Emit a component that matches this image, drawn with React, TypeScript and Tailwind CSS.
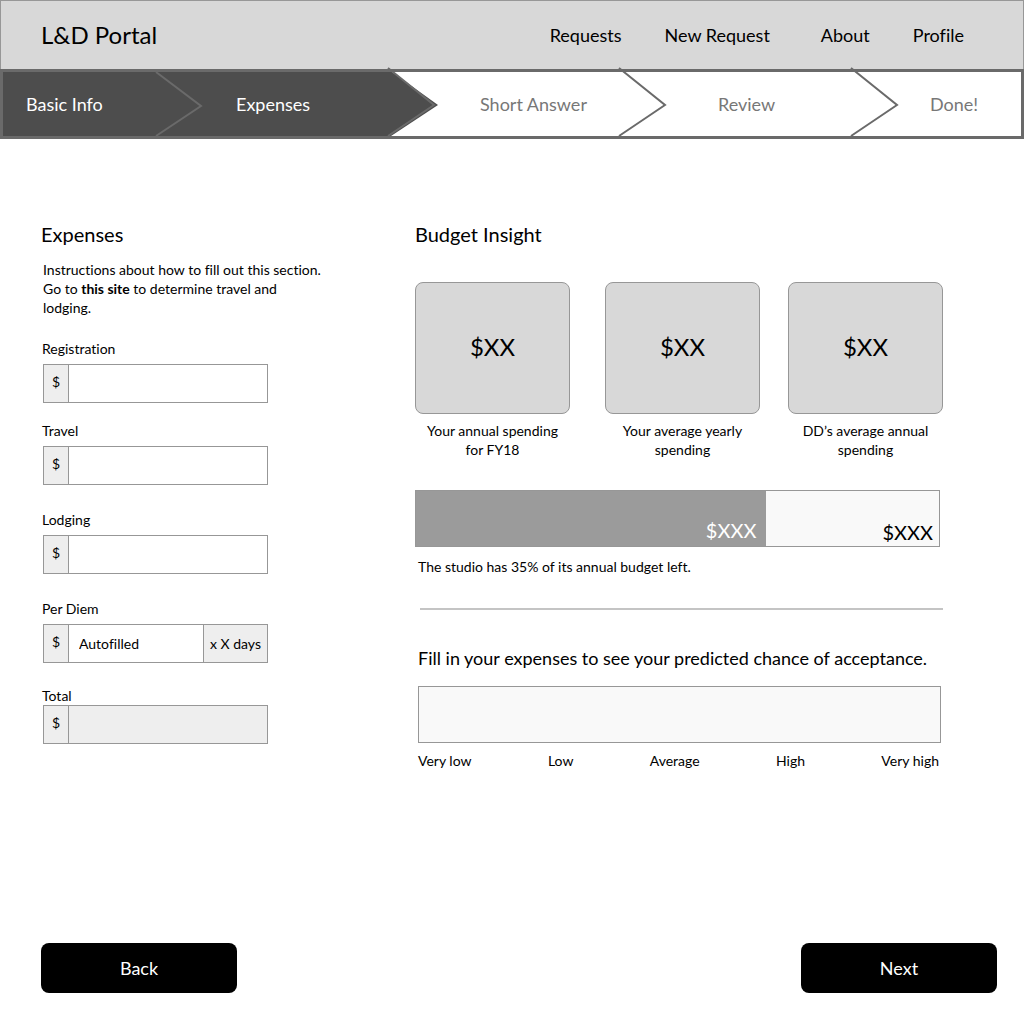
import React from "react";

const NAV = [
  { label: "Requests", space: "mr-[43px]" },
  { label: "New Request", space: "mr-[51px]" },
  { label: "About", space: "mr-[43px]" },
  { label: "Profile", space: "" },
];

const STEPS = [
  { label: "Basic Info", pad: "pl-[23px]", done: true },
  { label: "Expenses", pad: "pl-[33px]", done: true, current: true },
  { label: "Short Answer", pad: "pl-[44px]" },
  { label: "Review", pad: "pl-[51px]" },
  { label: "Done!", pad: "pl-[31px]", last: true },
];

const STATS = [
  { id: "own-year", text: "Your annual spending for FY18" },
  { id: "own-average", text: "Your average yearly spending" },
  { id: "all-average", text: "DD’s average annual spending" },
];

const LEVELS = ["Very low", "Low", "Average", "High", "Very high"];

function Chevron({ filled, inside }: { filled?: boolean; inside?: boolean }) {
  return (
    <svg width="48" height="64" viewBox="0 0 48 64" className="shrink-0 overflow-visible" aria-hidden="true">
      {filled && <path d="M-1 0H4L50 33L3 64H-1Z" fill="#4d4d4d" />}
      <path
        d={inside ? "M1 0L46 34L1 64" : "M0 -4L46 33L0 64"}
        fill="none"
        stroke="#6a6a6a"
        strokeWidth="2"
      />
    </svg>
  );
}

type FieldProps = {
  id: string;
  label: string;
  space?: string;
  value?: string;
  suffix?: string;
  total?: boolean;
};

function Field({ id, label, space = "", value, suffix, total }: FieldProps) {
  return (
    <div className={space}>
      <label htmlFor={id} className={total ? "block" : "block pb-1.5"}>
        {label}
      </label>
      <div className="ml-px flex h-[39px] w-full max-w-[225px] border border-[#979797] bg-white">
        <span className="flex w-[25px] shrink-0 items-center justify-center border-r border-[#979797] bg-[#eeeeee] pb-1">
          $
        </span>
        <input
          id={id}
          type="text"
          defaultValue={value}
          readOnly={total}
          className={
            total
              ? "min-w-0 flex-1 bg-[#eeeeee] px-2.5 outline-none"
              : "min-w-0 flex-1 bg-white px-2.5 outline-none"
          }
        />
        {suffix && (
          <span className="flex w-16 shrink-0 items-center justify-center border-l border-[#979797] bg-[#eeeeee] whitespace-nowrap">
            {suffix}
          </span>
        )}
      </div>
    </div>
  );
}

export default function App() {
  return (
    <div className="flex min-h-screen flex-col bg-white font-['Lato',sans-serif] text-sm leading-[19px] text-black [font-variant-ligatures:none]">
      <header className="flex h-[69px] items-center justify-between border border-b-0 border-[#979797] bg-[#d8d8d8] pr-[59px] pl-10">
        <a href="#home" className="text-2xl">
          L&amp;D Portal
        </a>
        <nav className="flex text-lg">
          {NAV.map((item) => (
            <a key={item.label} href="#nav" className={item.space}>
              {item.label}
            </a>
          ))}
        </nav>
      </header>

      <ol className="grid h-[70px] grid-cols-[200fr_233fr_231fr_232fr_122fr] border-3 border-[#6a6a6a] text-lg">
        {STEPS.map((step) => (
          <li
            key={step.label}
            aria-current={step.current ? "step" : undefined}
            className={
              step.done && !step.current ? "flex bg-[#4d4d4d] text-white" : step.done ? "flex text-white" : "flex text-[#777777]"
            }
          >
            <span
              className={`flex flex-1 items-center whitespace-nowrap ${step.pad} ${step.done ? "bg-[#4d4d4d]" : ""}`}
            >
              {step.label}
            </span>
            {!step.last && <Chevron filled={step.current} inside={step.done && !step.current} />}
          </li>
        ))}
      </ol>

      <main className="flex flex-1 flex-col">
        <div className="grid grid-cols-[374px_1fr] pt-[83px] pr-[81px] pl-[41px]">
          <form>
            <h2 className="text-xl leading-6">Expenses</h2>
            <p className="mt-3.5 ml-0.5 max-w-[282px]">
              Instructions about how to fill out this section. Go to{" "}
              <a href="#site" className="font-bold">
                this site
              </a>{" "}
              to determine travel and lodging.
            </p>
            <div className="mt-[22px] pl-px">
              <Field id="registration" label="Registration" />
              <Field id="travel" label="Travel" space="mt-[18px]" />
              <Field id="lodging" label="Lodging" space="mt-[25px]" />
              <Field id="per-diem" label="Per Diem" space="mt-[25px]" value="Autofilled" suffix="x X days" />
              <Field id="total" label="Total" space="mt-[23px]" total />
            </div>
          </form>

          <section>
            <h2 className="text-xl leading-6">Budget Insight</h2>
            <div className="mt-9 grid grid-cols-[190fr_183fr_155fr]">
              {STATS.map((stat) => (
                <figure key={stat.id} className="w-[155px]">
                  <div className="flex h-[132px] items-center justify-center rounded-lg border border-[#979797] bg-[#d8d8d8] pb-0.5 text-2xl">
                    $XX
                  </div>
                  <figcaption className="mt-[7px] px-2 text-center">{stat.text}</figcaption>
                </figure>
              ))}
            </div>

            <div className="mt-[31px] mr-[3px] flex h-[57px] items-end border border-[#979797] bg-[#f9f9f9] text-xl leading-6">
              <div className="flex h-full w-[67%] items-end justify-end bg-[#9b9b9b] pr-2.5 pb-1 text-white">$XXX</div>
              <div className="flex-1 pr-1.5 pb-0.5 text-right">$XXX</div>
            </div>
            <p className="mt-2.5 ml-[3px]">The studio has 35% of its annual budget left.</p>
            <hr className="mt-8 ml-[5px] border-t-2 border-[#c4c4c4]" />

            <div className="ml-[3px]">
              <h3 className="mt-9 text-lg leading-6 whitespace-nowrap">
                Fill in your expenses to see your predicted chance of acceptance.
              </h3>
              <div className="mt-4 mr-0.5 h-[57px] border border-[#979797] bg-[#f9f9f9]" />
              <div className="mt-2 mr-1 flex justify-between">
                {LEVELS.map((level) => (
                  <span key={level}>{level}</span>
                ))}
              </div>
            </div>
          </section>
        </div>

        <div className="mt-auto flex justify-between pt-10 pr-[27px] pb-[31px] pl-[41px] text-lg text-white">
          <button type="button" className="h-[50px] w-[196px] rounded-lg bg-black">
            Back
          </button>
          <button type="button" className="h-[50px] w-[196px] rounded-lg bg-black">
            Next
          </button>
        </div>
      </main>
    </div>
  );
}
